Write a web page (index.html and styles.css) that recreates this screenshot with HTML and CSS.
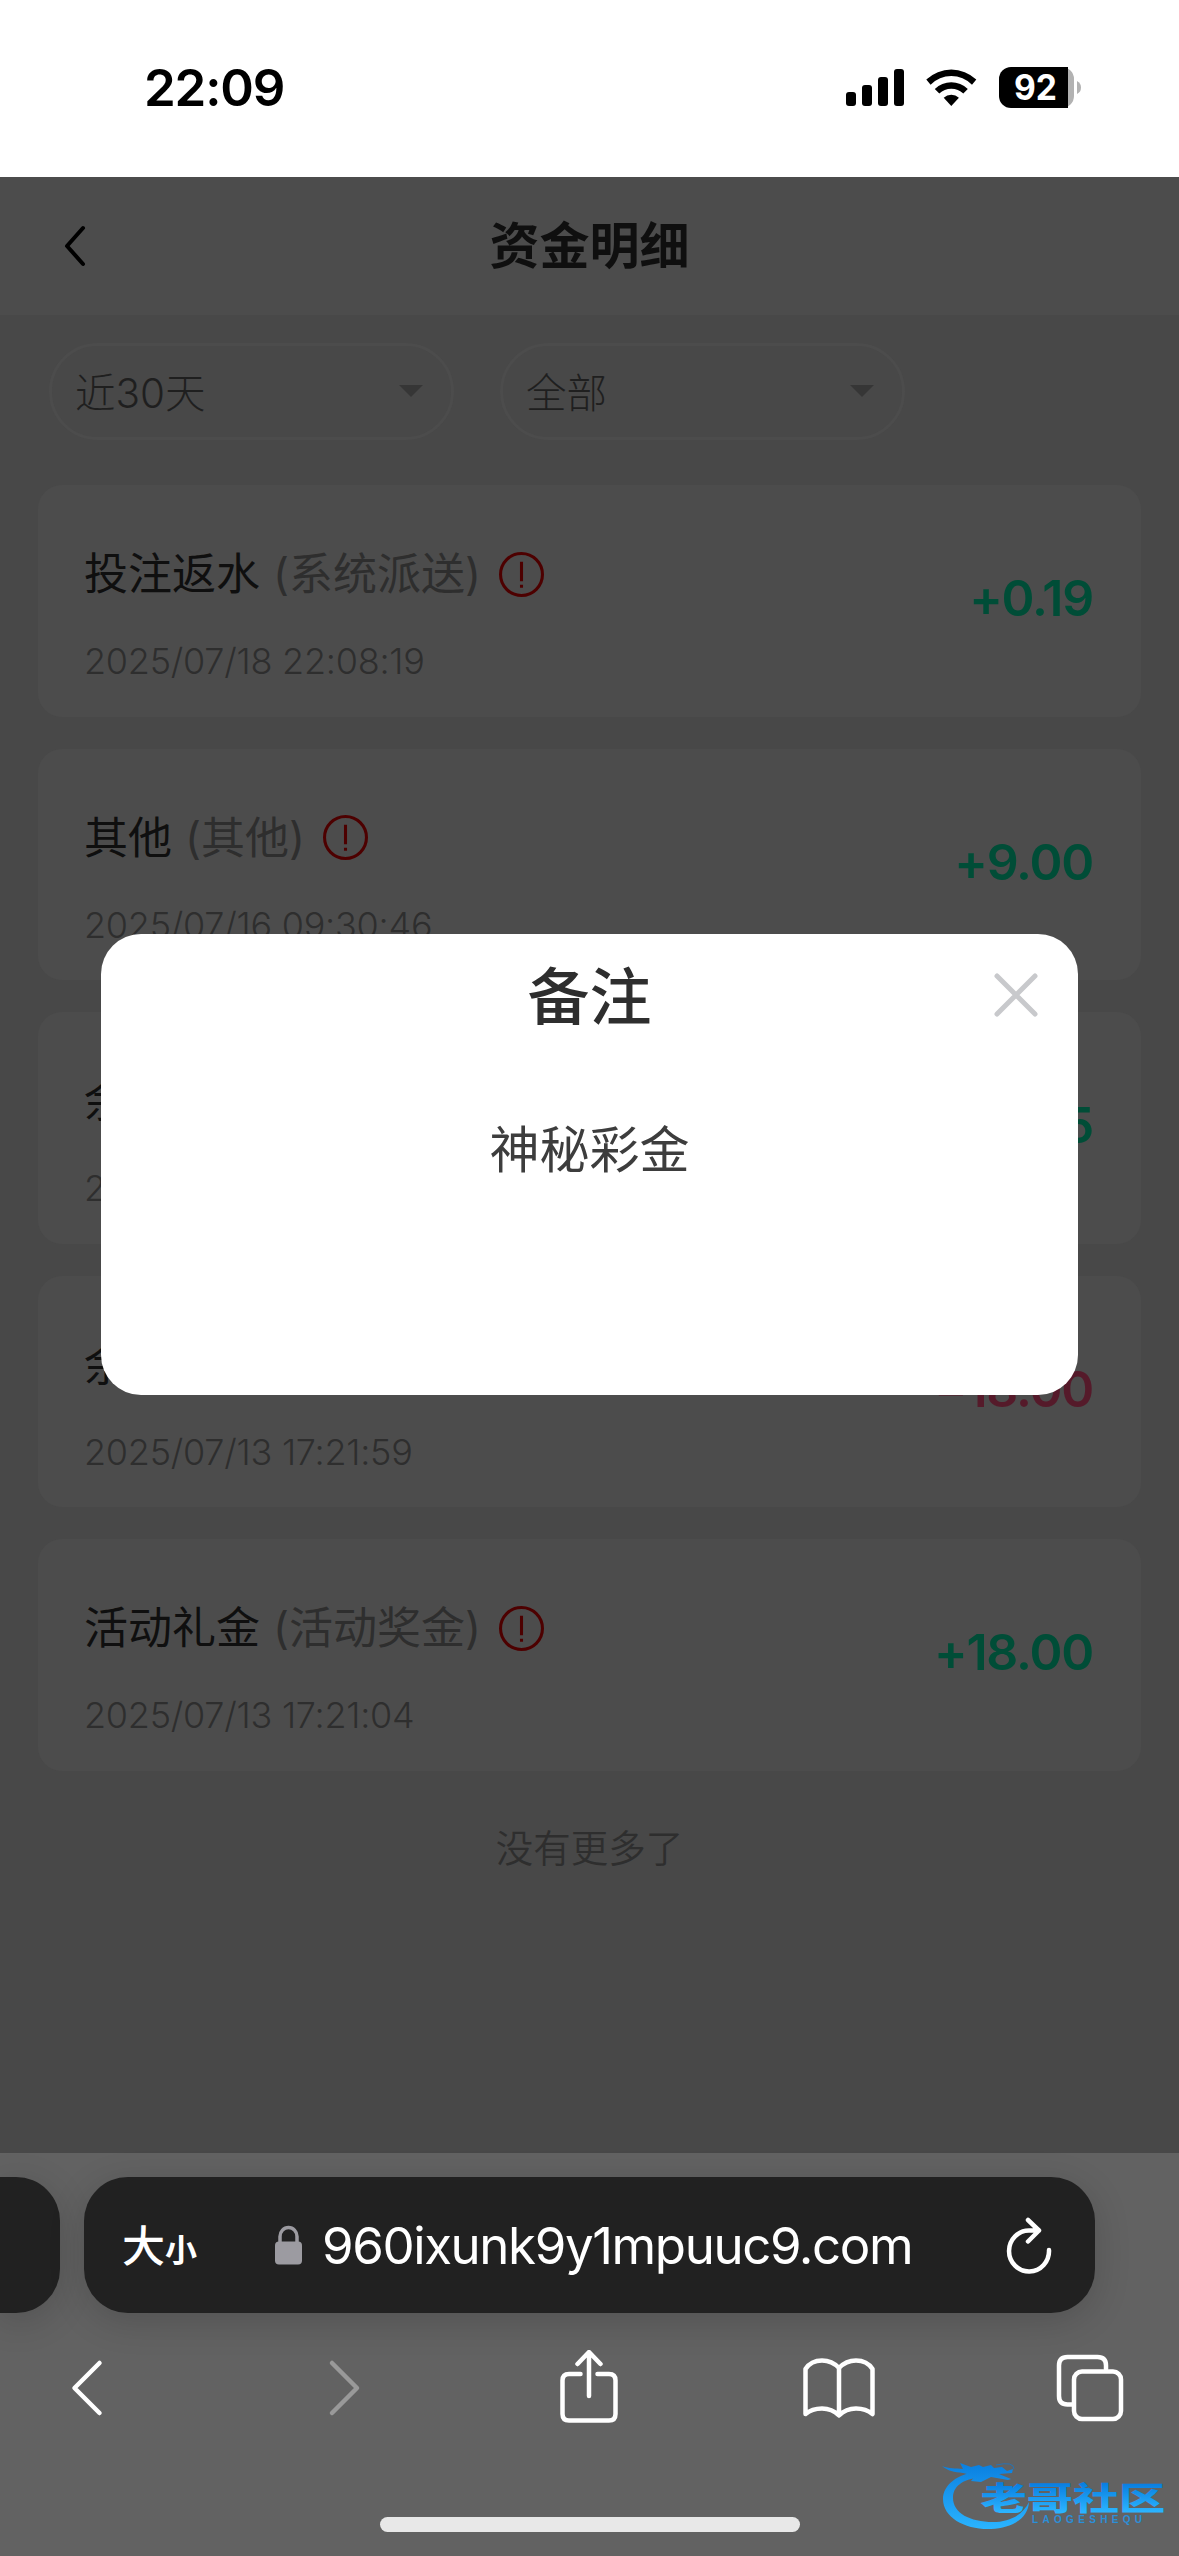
FILE: index.html
```html
<!DOCTYPE html>
<html lang="zh-CN">
<head>
<meta charset="utf-8">
<title>资金明细</title>
<link rel="stylesheet" href="styles.css">
</head>
<body>
<div class="screen">
  <header class="status">
    <span class="clock">22:09</span>
    <svg class="signals" width="240" height="44" viewBox="0 0 240 44">
      <rect x="2" y="26" width="10" height="14" rx="3"/>
      <rect x="18" y="19" width="10" height="21" rx="3"/>
      <rect x="34" y="11" width="10" height="29" rx="3"/>
      <rect x="50" y="3" width="10" height="37" rx="3"/>
      <path d="M82.300 13.500 A36.500 36.500 0 0 1 132.300 13.500 L128 18.800 A29 29 0 0 0 86.600 18.800Z"/>
      <path d="M90.800 22.900 A24 24 0 0 1 123.800 22.900 L119.300 27.500 A17.500 17.500 0 0 0 95.300 27.500Z"/>
      <path d="M99.700 31.800 A11 11 0 0 1 114.900 31.800 L107.300 40Z"/>
      <path class="battery-rest" d="M224 1 H216 V42 H218 A12 12 0 0 0 230 30 V13 A12 12 0 0 0 218 1Z"/>
      <path d="M224 1 H167 A12 12 0 0 0 155 13 V30 A12 12 0 0 0 167 42 H224Z"/>
      <path class="battery-rest" d="M233 15 Q237 17 237 21.500 Q237 26 233 28Z"/>
      <text class="battery-text" x="170" y="34" textLength="43" lengthAdjust="spacingAndGlyphs">92</text>
    </svg>
  </header>

  <main class="page">
    <nav class="titlebar">
      <svg class="back" width="24" height="42" viewBox="0 0 24 42"><path d="M20 3 L4 21 L20 39"/></svg>
      <h1>资金明细</h1>
    </nav>

    <div class="filters">
      <div class="filter"><span>近30天</span><i class="caret"></i></div>
      <div class="filter"><span>全部</span><i class="caret"></i></div>
    </div>

    <section class="records">
      <article class="record">
        <div class="info">
          <div class="name">投注返水<span class="kind">(系统派送)</span>
            <svg class="alert" viewBox="0 0 44 44"><circle cx="22" cy="22" r="20.500"/><path d="M22 9.500 V28.500 M22 32 V35"/></svg></div>
          <time>2025/07/18 22:08:19</time>
        </div>
        <b class="amount">+0.19</b>
      </article>
      <article class="record">
        <div class="info">
          <div class="name">其他<span class="kind">(其他)</span>
            <svg class="alert" viewBox="0 0 44 44"><circle cx="22" cy="22" r="20.500"/><path d="M22 9.500 V28.500 M22 32 V35"/></svg></div>
          <time>2025/07/16 09:30:46</time>
        </div>
        <b class="amount">+9.00</b>
      </article>
      <article class="record">
        <div class="info">
          <div class="name">余额</div>
          <time>2025/07/13</time>
        </div>
        <b class="amount">+0.15</b>
      </article>
      <article class="record">
        <div class="info">
          <div class="name">余额</div>
          <time>2025/07/13 17:21:59</time>
        </div>
        <b class="amount out">−18.00</b>
      </article>
      <article class="record">
        <div class="info">
          <div class="name">活动礼金<span class="kind">(活动奖金)</span>
            <svg class="alert" viewBox="0 0 44 44"><circle cx="22" cy="22" r="20.500"/><path d="M22 9.500 V28.500 M22 32 V35"/></svg></div>
          <time>2025/07/13 17:21:04</time>
        </div>
        <b class="amount">+18.00</b>
      </article>
    </section>
    <p class="end">没有更多了</p>
  </main>

  <footer class="browser">
    <div class="tabs">
      <div class="tab previous"></div>
      <div class="tab current">
        <span class="size"><span>大</span><small>小</small></span>
        <svg class="lock" width="27" height="40" viewBox="0 0 27 40"><path class="shackle" d="M5 19 V11.500 A8.500 9 0 0 1 22 11.500 V19"/><rect y="16.500" width="27" height="23" rx="4"/></svg>
        <span class="url">960ixunk9y1mpuuc9.com</span>
        <svg class="reload line" width="48" height="58" viewBox="0 0 48 58"><path d="M34 14.500 H24.500 A20 20.500 0 1 0 44 34 M23 4 L34 14.500 L23 25.500"/></svg>
      </div>
    </div>
    <div class="tools">
      <svg class="line" width="76" height="58" viewBox="0 0 34 58"><path d="M29.500 4 L4.500 29 L29.500 54"/></svg>
      <svg class="line dim" width="76" height="58" viewBox="-6.500 0 34 58"><path d="M4.500 4 L29.500 29 L4.500 54"/></svg>
      <svg class="line" width="76" height="76" viewBox="0 2 60 76"><path d="M21.500 26 H10 Q3.500 26 3.500 32.500 V66 Q3.500 72.500 10 72.500 H50 Q56.500 72.500 56.500 66 V32.500 Q56.500 26 50 26 H38.500 M30 48 V5 M18.500 16 L30 4 L41.500 16"/></svg>
      <svg class="line" width="76" height="62" viewBox="0 0 76 62"><path d="M38 11 Q31 3.500 21 3.500 Q10 3.500 4.500 12 V57 Q11 51.500 21 51.500 Q31 51.500 38 58.500 Q45 51.500 55 51.500 Q65 51.500 71.500 57 V12 Q66 3.500 55 3.500 Q45 3.500 38 11 V58"/></svg>
      <svg class="line" width="76" height="70" viewBox="0 0 70 70"><rect x="19" y="18.500" width="47" height="47.500" rx="8"/><path d="M17 51.500 H12.500 Q4 51.500 4 43 V12.500 Q4 4 12.500 4 H42.500 Q51 4 51 12.500 V16"/></svg>
    </div>
    <div class="home"></div>
  </footer>

  <div class="dialog">
    <h2>备注</h2>
    <svg class="close" width="48" height="48" viewBox="0 0 48 48"><path d="M5 5 L43 43 M43 5 L5 43"/></svg>
    <p>神秘彩金</p>
  </div>

  <svg class="brand" width="230" height="80" viewBox="0 0 230 80">
    <defs>
      <linearGradient id="wave" gradientUnits="userSpaceOnUse" x1="0" y1="4" x2="0" y2="70"><stop offset="0" stop-color="#0a7fe0"/><stop offset="1" stop-color="#2bb4ff"/></linearGradient>
      <linearGradient id="ink" gradientUnits="userSpaceOnUse" x1="0" y1="-30" x2="0" y2="2"><stop offset="0" stop-color="#087de0"/><stop offset="1" stop-color="#2bb4ff"/></linearGradient>
    </defs>
    <g fill="url(#wave)">
      <path d="M38 12 C16 15 2 26 2 40 C2 59 25 71 50 70 C72 69 87 59 88 43 C82 56 68 63 52 63 C29 63 12 54 12 39 C12 28 20 20 42 18Z"/>
      <path d="M1 7 C8 10 14 9 22 10 L19 4 L30 8 L38 6 L42 8 L50 6 L53 9 L61 8 L66 12 L72 10 L71 14 L58 15 L70 20 L67 21 L50 18 L40 23 L30 22 L34 17 L22 14 C13 13 7 12 1 7Z"/>
      <path class="whisker" d="M55 6 Q73 2 73 10"/>
    </g>
    <text class="brand-cn" fill="url(#ink)" transform="translate(39.500 51) scale(1.320 .9)">老哥社区</text>
    <text class="brand-en" x="91" y="64" textLength="110">LAOGESHEQU</text>
  </svg>
</div>
</body>
</html>
```
FILE: styles.css
```css
* { box-sizing: border-box; margin: 0; padding: 0; }

body {
  width: 1179px;
  font-family: Inter, "Noto Sans CJK SC", sans-serif;
  background: #484848;
}

.screen {
  position: relative;
  display: flex;
  flex-direction: column;
  width: 1179px;
  height: 2556px;
  overflow: hidden;
}

.status {
  display: flex;
  justify-content: space-between;
  height: 177px;
  padding: 66px 95px 0 144px;
  background: #fff;
}
.clock { font-size: 51px; line-height: 44px; font-weight: 600; letter-spacing: -1.200px; }
.battery-rest { fill: #b2b2b2; }
.battery-text { font-size: 35px; font-weight: 700; fill: #fff; }

.page { height: 1976px; background: #484848; }

.titlebar {
  display: grid;
  grid-template-columns: 100px 1fr 100px;
  align-items: center;
  height: 138px;
  background: #4c4c4c;
}
.back { margin-left: 63px; fill: none; stroke: #000; stroke-width: 4; stroke-linecap: round; stroke-linejoin: round; }
.titlebar h1 { font-size: 50px; font-weight: 700; line-height: 60px; text-align: center; color: #0f0f0f; }

.filters { display: flex; gap: 46px; padding: 28px 49px 45px; }
.filter {
  display: flex;
  align-items: center;
  justify-content: space-between;
  width: 405px;
  height: 97px;
  padding: 0 28px 3px 24px;
  border: 3px solid #4c4c4c;
  border-radius: 49px;
  font-size: 40.500px;
  font-weight: 300;
  color: #1f1f1f;
}
.filter span { margin-left: -1px; }
.caret { margin-top: 2px; border: 12px solid transparent; border-top-color: #363636; border-bottom: 0; }

.records { display: flex; flex-direction: column; gap: 32px; padding: 0 38px; }
.record {
  display: flex;
  align-items: center;
  justify-content: space-between;
  height: 231.500px;
  padding: 0 48px 0 46px;
  border-radius: 24px;
  background: #4c4c4c;
}
.info { padding-top: 26px; }
.name { display: flex; align-items: center; height: 60px; font-size: 44px; line-height: 60px; color: #0f0f0f; }
.kind { margin-left: 13px; color: #2e2e2e; }
.alert { width: 45px; height: 45px; margin-left: 18px; fill: none; stroke: #4d0000; stroke-width: 3; }
.record time { display: block; margin-top: 35px; font-size: 36px; line-height: 44px; font-weight: 350; font-feature-settings: "calt" 0; letter-spacing: -.250px; color: #2e2e2e; }
.amount { margin-top: -5px; font-size: 50px; font-weight: 600; line-height: 60px; font-feature-settings: "calt" 0; letter-spacing: -1.200px; color: #004d37; }
.amount.out { color: #551a2a; }
.end { margin-top: 51px; font-size: 37.500px; line-height: 54px; font-weight: 350; text-align: center; color: #2e2e2e; }

.browser { height: 403px; padding-top: 24px; background: #626262; }
.tabs { display: flex; gap: 24px; height: 136px; }
.tab { background: #212121; border-radius: 44px; box-shadow: 0 8px 36px rgba(0, 0, 0, .16); }
.previous { width: 60px; border-radius: 0 44px 44px 0; }
.current { display: flex; align-items: center; width: 1011px; padding: 0 42px 0 38px; color: #fff; }
.size { display: flex; align-items: baseline; width: 153px; padding-top: 6px; font-size: 43px; line-height: 60px; font-weight: 500; }
.size small { font-size: 32px; font-weight: 700; }
.lock { fill: #9c9ba1; }
.shackle { fill: none; stroke: #9c9ba1; stroke-width: 3.500; }
.url { margin: 2px 0 0 20px; font-size: 51px; line-height: 60px; letter-spacing: -1.400px; }
.reload { margin: -1px 0 0 auto; }
.line { fill: none; stroke: #fff; stroke-width: 4.500; stroke-linecap: round; stroke-linejoin: round; }
.dim { stroke: #999; }

.tools { display: flex; align-items: center; justify-content: space-between; height: 148px; padding: 2px 51px 0 49px; }
.home { width: 420px; height: 15px; margin: 56px 0 0 380px; border-radius: 8px; background: #e8e8e8; }

.dialog {
  position: absolute;
  left: 101px;
  top: 934px;
  width: 977px;
  height: 461px;
  padding-top: 24px;
  border-radius: 40px;
  background: #fff;
  text-align: center;
}
.dialog h2 { font-size: 62px; line-height: 80px; font-weight: 500; color: #2e2e2e; }
.dialog p { margin-top: 82px; font-size: 50px; line-height: 60px; color: #3d3d3d; }
.close { position: absolute; right: 38px; top: 37px; fill: none; stroke: #c8c9cc; stroke-width: 5; stroke-linecap: round; }

.brand { position: absolute; left: 941px; top: 2459px; }
.brand-cn { font: 900 35px "Noto Sans CJK SC", sans-serif; }
.brand-en { font: bold 10px "Liberation Sans", sans-serif; fill: #2c8fd8; }
.whisker { fill: none; stroke: #2773b4; stroke-width: 1; }
```
